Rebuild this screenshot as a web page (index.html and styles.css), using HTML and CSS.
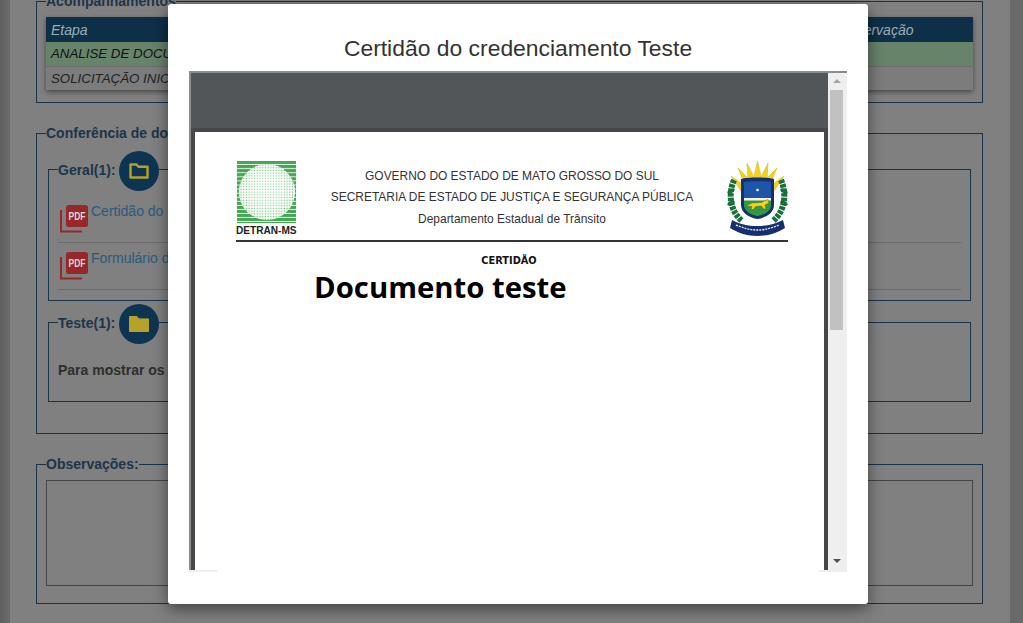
FILE: index.html
```html
<!DOCTYPE html>
<html lang="pt-BR">
<head>
<meta charset="utf-8">
<title>Certidão do credenciamento</title>
<link rel="stylesheet" href="styles.css">
</head>
<body>
<main class="sheet">
  <fieldset class="box box-first">
    <legend class="box-title">Acompanhamentos</legend>
    <table class="steps">
      <thead><tr><th>Etapa</th><th class="col-note">Observação</th></tr></thead>
      <tbody>
        <tr class="row-current"><td>ANALISE DE DOCUMENTOS</td><td></td></tr>
        <tr class="row-done"><td>SOLICITAÇÃO INICIAL</td><td></td></tr>
      </tbody>
    </table>
  </fieldset>

  <fieldset class="box box-docs">
    <legend class="box-title">Conferência de documentos</legend>
    <fieldset class="group">
      <legend class="group-title"><span class="group-label">Geral(1):</span>
        <span class="round-btn">
          <svg width="20" height="16" viewBox="0 0 20 16"><path d="M1.500 14.500V1.500h6l2 2.200h9v10.800z" fill="none" stroke="#b5a12c" stroke-width="2.400" stroke-linejoin="round"/></svg>
        </span>
      </legend>
      <div class="doc-row">
        <svg class="pdf" width="28" height="28" viewBox="0 0 28 28"><path d="M1 5v21.500h21" fill="none" stroke="#962828" stroke-width="2"/><rect x="6" y="0" width="22" height="22" rx="2.500" fill="#962828"/><text x="17" y="15" text-anchor="middle" textLength="17" lengthAdjust="spacingAndGlyphs" class="pdf-text">PDF</text></svg>
        <a class="doc-link">Certidão do credenciamento</a>
      </div>
      <div class="doc-row">
        <svg class="pdf" width="28" height="28" viewBox="0 0 28 28"><path d="M1 5v21.500h21" fill="none" stroke="#962828" stroke-width="2"/><rect x="6" y="0" width="22" height="22" rx="2.500" fill="#962828"/><text x="17" y="15" text-anchor="middle" textLength="17" lengthAdjust="spacingAndGlyphs" class="pdf-text">PDF</text></svg>
        <a class="doc-link">Formulário de credenciamento</a>
      </div>
    </fieldset>
    <fieldset class="group group-test">
      <legend class="group-title"><span class="group-label">Teste(1):</span>
        <span class="round-btn">
          <svg width="20" height="16" viewBox="0 0 20 16"><path d="M0.500 15.500V0.500h7.500l2 2.400h9.500v12.600z" fill="#b5a12c" stroke="#b5a12c" stroke-linejoin="round"/></svg>
        </span>
      </legend>
      <p class="hint">Para mostrar os documentos, clique na pasta</p>
    </fieldset>
  </fieldset>

  <fieldset class="box box-notes">
    <legend class="box-title">Observações:</legend>
    <div class="notes"></div>
  </fieldset>
</main>

<section class="modal">
  <h1 class="modal-title">Certidão do credenciamento Teste</h1>
  <div class="viewer">
    <div class="viewer-body">
      <div class="pdf-area">
        <article class="pdf-page">
          <header class="letterhead">
            <div class="detran">
              <svg width="61" height="64" viewBox="0 0 61 64">
                <defs>
                  <pattern id="stripes" width="4" height="4.200" patternUnits="userSpaceOnUse"><rect width="4" height="4.200" fill="#fff"/><rect width="4" height="3.300" fill="#43a851"/></pattern>
                  <pattern id="dots" width="2.800" height="2.800" patternUnits="userSpaceOnUse"><rect width="2.800" height="2.800" fill="#fff"/><rect x="0.700" y="0.700" width="1.300" height="1.300" fill="#5fb569"/></pattern>
                  <radialGradient id="shine" cx=".5" cy=".45" r=".5"><stop offset=".5" stop-color="#fff" stop-opacity=".35"/><stop offset="1" stop-color="#fff" stop-opacity="0"/></radialGradient>
                </defs>
                <rect width="61" height="64" fill="url(#stripes)"/>
                <circle cx="31" cy="32" r="29" fill="url(#dots)"/>
                <circle cx="31" cy="32" r="29" fill="url(#shine)"/>
              </svg>
              <span class="detran-name">DETRAN-MS</span>
            </div>
            <div class="letterhead-text">
              <p>GOVERNO DO ESTADO DE MATO GROSSO DO SUL</p>
              <p>SECRETARIA DE ESTADO DE JUSTIÇA E SEGURANÇA PÚBLICA</p>
              <p>Departamento Estadual de Trânsito</p>
            </div>
            <svg class="crest" width="61" height="75" viewBox="0 0 61 75">
              <g fill="#f2d21f" stroke="#d9b30e" stroke-width=".5">
                <path d="M30.500 0l4 18h-8z"/><path d="M20 2l8 16-7 2z"/><path d="M41 2l-8 16 7 2z"/>
                <path d="M11 7l13 13-6 4z"/><path d="M50 7L37 20l6 4z"/>
                <path d="M4 15l14 10-4 5z"/><path d="M57 15L43 25l4 5z"/>
              </g>
              <g fill="none" stroke="#17703a" stroke-width="6" stroke-dasharray="3.500 1">
                <path d="M7 19C1 33 3 50 15 60"/><path d="M54 19c6 14 4 31-8 41"/>
              </g>
              <g fill="#17703a"><ellipse cx="4" cy="30" rx="4" ry="2" transform="rotate(-30 4 30)"/><ellipse cx="57" cy="30" rx="4" ry="2" transform="rotate(30 57 30)"/><ellipse cx="4" cy="42" rx="4" ry="2" transform="rotate(-30 4 42)"/><ellipse cx="57" cy="42" rx="4" ry="2" transform="rotate(30 57 42)"/></g>
              <path d="M14 18c6-2 27-2 33 0v26c0 8-9 13-16.500 14C23 57 14 52 14 44z" fill="#16306f"/>
              <path d="M17 21c5-1 22-1 27 0v17H17z" fill="#1e55a8"/>
              <path d="M17 38h27v6c0 6-7 10-13.500 11C24 54 17 50 17 44z" fill="#2f9a45"/>
              <path d="M17 37h27v2.500H17z" fill="#f4f4f4"/>
              <circle cx="30.500" cy="29" r="1.300" fill="#fff"/>
              <path d="M19 45l6-3 9-.5 7-3 1 3.500-4 2 1 4-2.500 0-2-3-6 .5-2 3h-2.500l1-3z" fill="#f0d421" stroke="#5a4a08" stroke-width=".4"/>
              <path d="M5 59c8 4 15 6 25.500 6S48 63 56 59l2 8c-8 5-17 8-27.500 8S11 72 3 67z" fill="#16306f"/>
              <path d="M9 64c7 3 14 5 21.500 5S45 67 52 64" fill="none" stroke="#dfe6f2" stroke-width="1.400" stroke-dasharray="2 1"/>
            </svg>
          </header>
          <hr class="letter-rule">
          <h2 class="cert-title">CERTIDÃO</h2>
          <p class="cert-body">Documento teste</p>
        </article>
      </div>
      <div class="scrollbar">
        <span class="arrow-up"></span>
        <span class="thumb"></span>
        <span class="arrow-down"></span>
      </div>
    </div>
    <div class="viewer-foot"><span></span><span></span></div>
  </div>
</section>
</body>
</html>
```
FILE: styles.css
```css
* { box-sizing: border-box; }
html, body { margin: 0; height: 100%; }
body {
  height: 623px;
  overflow: hidden;
  position: relative;
  font-family: "Liberation Sans", Arial, sans-serif;
  font-size: 14px;
  background: linear-gradient(90deg, #5e5e5e 0, #6c6c6c 10px, #6a6a6a 100%);
}
.sheet {
  margin: -9px 13px 0 10px;
  padding: 0 27px 0 26px;
  height: 632px;
  overflow: hidden;
  background: #808080;
}
fieldset { margin: 0; min-width: 0; }
.box { border: 1px solid #1b3348; padding: 6px 9px 11px; margin-top: 20px; }
.box-first { margin-top: 0; padding-bottom: 12px; }
.box-title, .group-title {
  padding: 0;
  font-weight: 700;
  color: #1d3549;
  line-height: 20px;
}
.steps {
  width: 100%;
  border-collapse: collapse;
  box-shadow: 0 2px 5px rgba(0, 0, 0, .45);
  font-style: italic;
  color: #111;
}
.steps th {
  height: 25px;
  padding: 0 5px;
  text-align: left;
  font-weight: 400;
  font-size: 14px;
  background: #0d3048;
  color: #9eacb7;
}
.steps td { height: 24px; padding: 0 5px; font-size: 13.300px; }
.col-note { width: 140px; }
.row-current td { background: #67836a; }
.row-done td { background: #7c7c7c; border-top: 1px solid #6d6d6d; color: #222; }

.box-docs { padding: 8px 11px 31px; }
.box-docs > .box-title { margin-left: -2px; }
.group { border: 1px solid #1b3348; padding: 8px 9px 10px; }
.group-title { display: flex; align-items: center; height: 37px; }
.group-label { width: 61px; }
.round-btn {
  width: 40px;
  height: 40px;
  margin-bottom: -3px;
  border-radius: 50%;
  background: #0d3552;
  display: flex;
  align-items: center;
  justify-content: center;
}
.doc-row {
  display: flex;
  gap: 3px;
  padding: 9px 0 9px 2px;
  border-bottom: 1px solid #6b6b6b;
}
.pdf { flex: none; }
.pdf-text { font: 700 10px "Liberation Sans", Arial, sans-serif; fill: #d8d8d8; }
.doc-link { color: #285a7e; line-height: 16px; margin-top: -2px; }
.group-test { margin-top: 3px; padding: 19px 9px 21px; }
.hint { margin: 0; font-weight: 700; line-height: 20px; color: #2e2e2e; }

.box-notes { padding: 6px 9px 17px; }
.notes { height: 106px; border: 1px solid #454545; }

.modal {
  position: absolute;
  left: 168px;
  top: 4px;
  width: 700px;
  height: 600px;
  padding: 30px 21px 0;
  background: #fff;
  border-radius: 3px;
  box-shadow: 0 5px 15px rgba(0, 0, 0, .5);
}
.modal-title {
  margin: 0 0 9px;
  text-align: center;
  font-weight: 400;
  font-size: 22.900px;
  line-height: 28px;
  color: #333;
}
.viewer { border-top: 2px solid #8c8c8c; }
.viewer-body { display: flex; height: 497px; }
.pdf-area {
  flex: 1;
  min-width: 0;
  overflow: hidden;
  border-left: 2px solid #8c8c8c;
  background: #525659;
  padding: 59px 4px 0;
}
.pdf-page {
  width: 629px;
  height: 600px;
  padding: 29px 36px 0 41px;
  background: #fff;
  box-shadow: 0 0 0 4px #45474a;
}
.letterhead { display: flex; justify-content: space-between; }
.detran { display: flex; flex-direction: column; width: 61px; height: 76px; }
.detran svg { display: block; }
.detran-name { margin-top: 1px; font-weight: 700; font-size: 10.100px; line-height: 13px; color: #222; white-space: nowrap; }
.letterhead-text { padding-top: 5px; text-align: center; color: #333; font-size: 11.940px; line-height: 21.400px; }
.letterhead-text p { margin: 0; white-space: nowrap; }
.crest { display: block; }
.letter-rule { margin: 3px 0 0; border: 0; border-top: 2px solid #333; }
.cert-title {
  margin: 12px 0 0;
  padding-right: 6px;
  text-align: center;
  font: 700 9.800px/14px "DejaVu Sans", sans-serif;
  color: #111;
}
.cert-body {
  margin: 0 0 0 78px;
  font: 700 29.300px/38px "Open Sans", sans-serif;
  color: #000;
}
.scrollbar {
  flex: none;
  width: 19px;
  background: #efefef;
  padding: 0 4px 0 2px;
  display: flex;
  flex-direction: column;
  align-items: center;
}
.arrow-up {
  margin-top: 6px;
  border: 4px solid transparent;
  border-top: 0;
  border-bottom: 4px solid #a5a5a5;
}
.thumb { width: 13px; height: 240px; margin-top: 7px; background: #c1c1c1; }
.arrow-down {
  margin-top: auto;
  margin-bottom: 7px;
  border: 4px solid transparent;
  border-bottom: 0;
  border-top: 4px solid #505050;
}
.viewer-foot { display: flex; justify-content: space-between; }
.viewer-foot span { width: 28px; height: 2px; background: #eee; }
```
